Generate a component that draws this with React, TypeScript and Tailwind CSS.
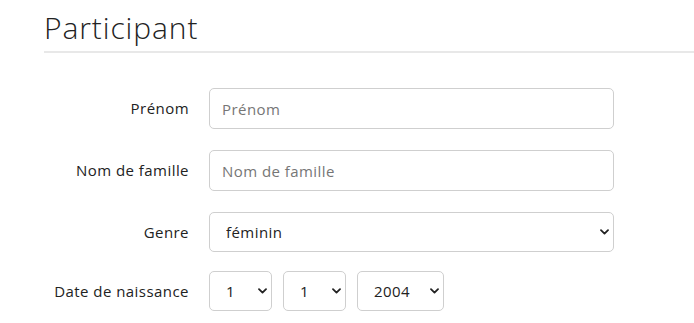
import React from "react";

const Chevron = () => (
  <svg
    className="pointer-events-none absolute right-[5px] top-1/2 -translate-y-1/2"
    width="9"
    height="6"
    viewBox="0 0 9 6"
    fill="none"
  >
    <path d="M1 1.2 L4.5 4.6 L8 1.2" stroke="#222" strokeWidth="1.8" strokeLinecap="round" strokeLinejoin="round" />
  </svg>
);

function Select({ value, options, className }: { value: string; options: string[]; className: string }) {
  return (
    <div className={"relative " + className}>
      <select
        defaultValue={value}
        className="h-full w-full appearance-none rounded-[5px] border border-[#cfcfcf] bg-white pl-[16px] text-[15px] tracking-[0.03em] text-[#222] outline-none"
      >
        {options.map((o) => (
          <option key={o}>{o}</option>
        ))}
      </select>
      <Chevron />
    </div>
  );
}

export default function App() {
  const font = { fontFamily: '"Open Sans", sans-serif' };
  return (
    <div className="min-h-[323px] bg-white pl-[44px] pt-[10px]" style={font}>
      <div className="border-b-[2px] border-[#e8e8e8] pb-[5px] text-[30px] font-light leading-[36px] tracking-[0.03em] text-[#222]">
        Participant
      </div>
      <div className="mt-[35px] flex flex-col gap-[21px]">
        <div className="flex items-center">
          <label className="w-[145px] text-right text-[15px] tracking-[0.03em] text-[#222]">Prénom</label>
          <input
            placeholder="Prénom"
            className="ml-[20px] h-[41px] w-[405px] rounded-[5px] border border-[#cfcfcf] px-[12px] text-[15px] tracking-[0.03em] text-[#222] outline-none placeholder:text-[#767676]"
          />
        </div>
        <div className="flex items-center">
          <label className="w-[145px] text-right text-[15px] tracking-[0.03em] text-[#222]">Nom de famille</label>
          <input
            placeholder="Nom de famille"
            className="ml-[20px] h-[41px] w-[405px] rounded-[5px] border border-[#cfcfcf] px-[12px] text-[15px] tracking-[0.03em] text-[#222] outline-none placeholder:text-[#767676]"
          />
        </div>
        <div className="flex items-center">
          <label className="w-[145px] text-right text-[15px] tracking-[0.03em] text-[#222]">Genre</label>
          <Select value="féminin" options={["féminin", "masculin"]} className="ml-[20px] h-[40px] w-[405px]" />
        </div>
        <div className="-mt-[2px] flex items-center">
          <label className="w-[145px] text-right text-[15px] tracking-[0.03em] text-[#222]">Date de naissance</label>
          <div className="ml-[20px] flex gap-[11px]">
            <Select value="1" options={["1", "2", "3"]} className="h-[40px] w-[63px]" />
            <Select value="1" options={["1", "2", "3"]} className="h-[40px] w-[63px]" />
            <Select value="2004" options={["2003", "2004", "2005"]} className="h-[40px] w-[87px]" />
          </div>
        </div>
      </div>
    </div>
  );
}
